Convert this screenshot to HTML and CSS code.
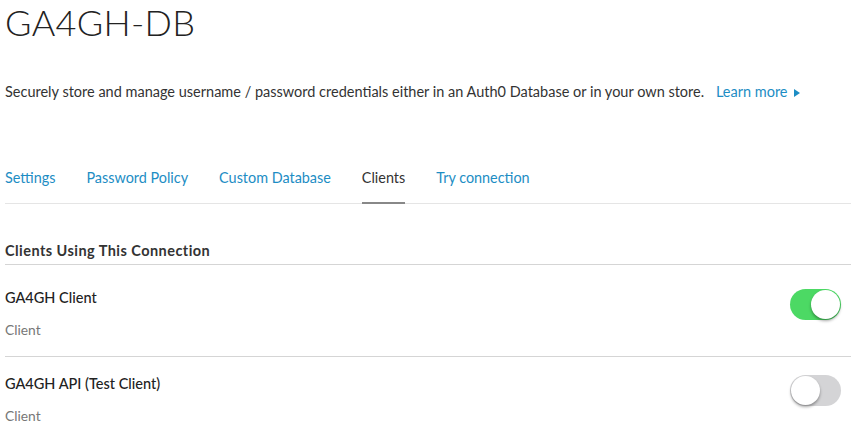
FILE: index.html
```html
<!DOCTYPE html>
<html>
<head>
<meta charset="utf-8">
<link rel="stylesheet" href="styles.css">
</head>
<body>
<div class="page">
  <h1 class="title">GA4GH-DB</h1>
  <p class="lead">Securely store and manage username / password credentials either in an Auth0 Database or in your own store. <a class="learn" href="#">Learn more <span class="tri"></span></a></p>
  <nav class="tabs">
    <a class="tab" href="#">Settings</a>
    <a class="tab" href="#">Password Policy</a>
    <a class="tab" href="#">Custom Database</a>
    <a class="tab active" href="#">Clients</a>
    <a class="tab" href="#">Try connection</a>
  </nav>
  <h2 class="section">Clients Using This Connection</h2>
  <div class="row">
    <div class="info">
      <div class="name">GA4GH Client</div>
      <div class="type">Client</div>
    </div>
    <span class="switch on"><span class="knob"></span></span>
  </div>
  <div class="row">
    <div class="info">
      <div class="name">GA4GH API (Test Client)</div>
      <div class="type">Client</div>
    </div>
    <span class="switch"><span class="knob"></span></span>
  </div>
</div>
</body>
</html>
```
FILE: styles.css
```css
* { box-sizing: border-box; }
html, body { margin: 0; padding: 0; background: #fff; }
body { font-family: Lato, "Noto Sans", sans-serif; color: #333; overflow: hidden; }
.page { padding-left: 5px; width: 851px; }
.title { margin: 0; padding-top: 0; font-size: 36px; font-weight: 300; color: #222; line-height: 44px; letter-spacing: 0.3px; }
.lead { margin: 38px 0 0; font-size: 14.5px; line-height: 20px; color: #333; }
.learn { color: #1d8dc4; text-decoration: none; margin-left: 8px; }
.tri { display: inline-block; width: 0; height: 0; border-left: 6px solid #1d8dc4; border-top: 4px solid transparent; border-bottom: 4px solid transparent; margin-left: 3px; }
.tabs { display: flex; gap: 31px; margin-top: 59px; border-bottom: 1px solid #e5e5e5; }
.tab { font-size: 14.4px; color: #1d8dc4; text-decoration: none; padding: 8px 0 16px; border-bottom: 2px solid transparent; margin-bottom: -1px; }
.tab.active { color: #333; border-bottom-color: #888; }
.section { margin: 38px 0 6px; font-size: 14.5px; font-weight: 700; color: #333; padding-bottom: 5px; border-bottom: 1px solid #d5d5d5; letter-spacing: 0.45px; }
.row { display: flex; align-items: flex-start; justify-content: space-between; padding: 18px 10px 18px 0; border-bottom: 1px solid #d5d5d5; }
.row:last-child { border-bottom: none; }
.name { font-size: 14.5px; color: #222; font-weight: 500; }
.type { font-size: 13.8px; color: #777; margin-top: 15px; }
.switch { position: relative; display: inline-block; margin-top: 0; width: 51px; height: 31px; border-radius: 16px; background: #d4d4d6; }
.switch.on { background: #4cd964; }
.knob { position: absolute; top: 1px; left: 1px; width: 29px; height: 29px; border-radius: 50%; background: #fff; box-shadow: 0 2px 3px rgba(0,0,0,0.35); }
.switch.on .knob { left: 21px; }
```
